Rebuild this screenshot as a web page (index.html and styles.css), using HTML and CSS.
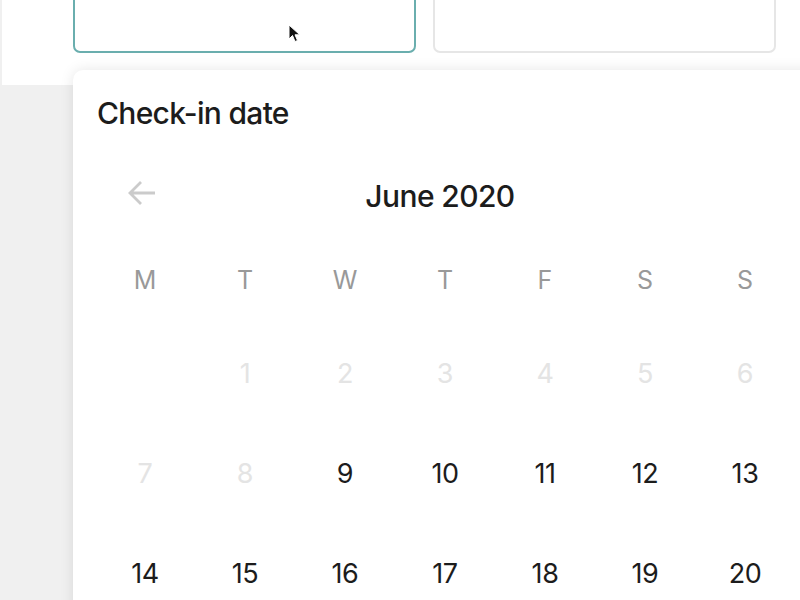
FILE: index.html
```html
<!DOCTYPE html>
<html lang="en">
<head>
<meta charset="utf-8">
<title>Check-in date</title>
<link rel="stylesheet" href="styles.css">
</head>
<body>
<div class="header">
  <div class="field field-active">
    <svg class="cursor" width="14" height="20" viewBox="0 0 14 20"><path d="M1 1 L1 15 L4.5 11.5 L7 17.5 L9.5 16.5 L7 10.8 L11.8 10.8 Z" fill="#111" stroke="#fff" stroke-width="1"/></svg>
  </div>
  <div class="field"></div>
</div>
<div class="popup">
  <h1 class="title">Check-in date</h1>
  <div class="nav">
    <svg class="arrow" width="32" height="32" viewBox="0 0 32 32"><path d="M29 16 H4 M15 5 L4 16 L15 27" fill="none" stroke="#cbcbcb" stroke-width="2.8"/></svg>
    <div class="month">June 2020</div>
  </div>
  <div class="grid weekdays">
    <div>M</div><div>T</div><div>W</div><div>T</div><div>F</div><div>S</div><div>S</div>
  </div>
  <div class="grid days">
    <div class="off"></div><div class="off">1</div><div class="off">2</div><div class="off">3</div><div class="off">4</div><div class="off">5</div><div class="off">6</div>
    <div class="off">7</div><div class="off">8</div><div>9</div><div>10</div><div>11</div><div>12</div><div>13</div>
    <div>14</div><div>15</div><div>16</div><div>17</div><div>18</div><div>19</div><div>20</div>
  </div>
</div>
</body>
</html>
```

FILE: styles.css
```css
* { box-sizing: border-box; }
html, body { margin: 0; padding: 0; }
body {
  width: 800px;
  height: 600px;
  overflow: hidden;
  background: #f0f0f0;
  font-family: Inter, "Liberation Sans", sans-serif;
  position: relative;
}
.header {
  height: 85px;
  margin-left: 2px;
  background: #fff;
  display: flex;
  gap: 17px;
  padding-left: 71px;
}
.field {
  width: 343px;
  height: 62px;
  margin-top: -9px;
  border: 2px solid #e6e6e6;
  border-radius: 7px;
  background: #fff;
  position: relative;
}
.field-active { border-color: #6aaeae; }
.cursor { position: absolute; left: 213px; top: 31px; }
.popup {
  position: absolute;
  left: 73px;
  top: 70px;
  width: 760px;
  height: 560px;
  background: #fff;
  border-radius: 10px;
  box-shadow: 0 0 14px rgba(0,0,0,0.10);
  padding: 26px 0 0 22px;
}
.title {
  margin: 0 0 0 2px;
  font-size: 30px;
  line-height: 34px;
  font-weight: 500;
  color: #1c1c1c;
  letter-spacing: -0.7px;
}
.nav {
  margin-top: 34px;
  height: 60px;
  position: relative;
  display: flex;
  align-items: center;
  width: 700px;
}
.arrow { position: absolute; left: 31px; top: 13px; }
.month {
  flex: 1;
  text-align: center;
  font-size: 30px;
  line-height: 36px;
  padding-top: 4px;
  font-weight: 500;
  color: #1c1c1c;
  letter-spacing: -0.6px;
  padding-right: 10px;
}
.grid {
  display: grid;
  grid-template-columns: repeat(7, 100px);
  text-align: center;
}
.weekdays {
  margin-top: 12px;
  height: 87px;
  align-items: center;
  font-size: 25px;
  color: #999;
}
.days { grid-auto-rows: 100px; align-items: center; font-size: 27px; color: #1c1c1c; letter-spacing: -0.4px; }
.days .off { color: #e4e4e4; }
```
